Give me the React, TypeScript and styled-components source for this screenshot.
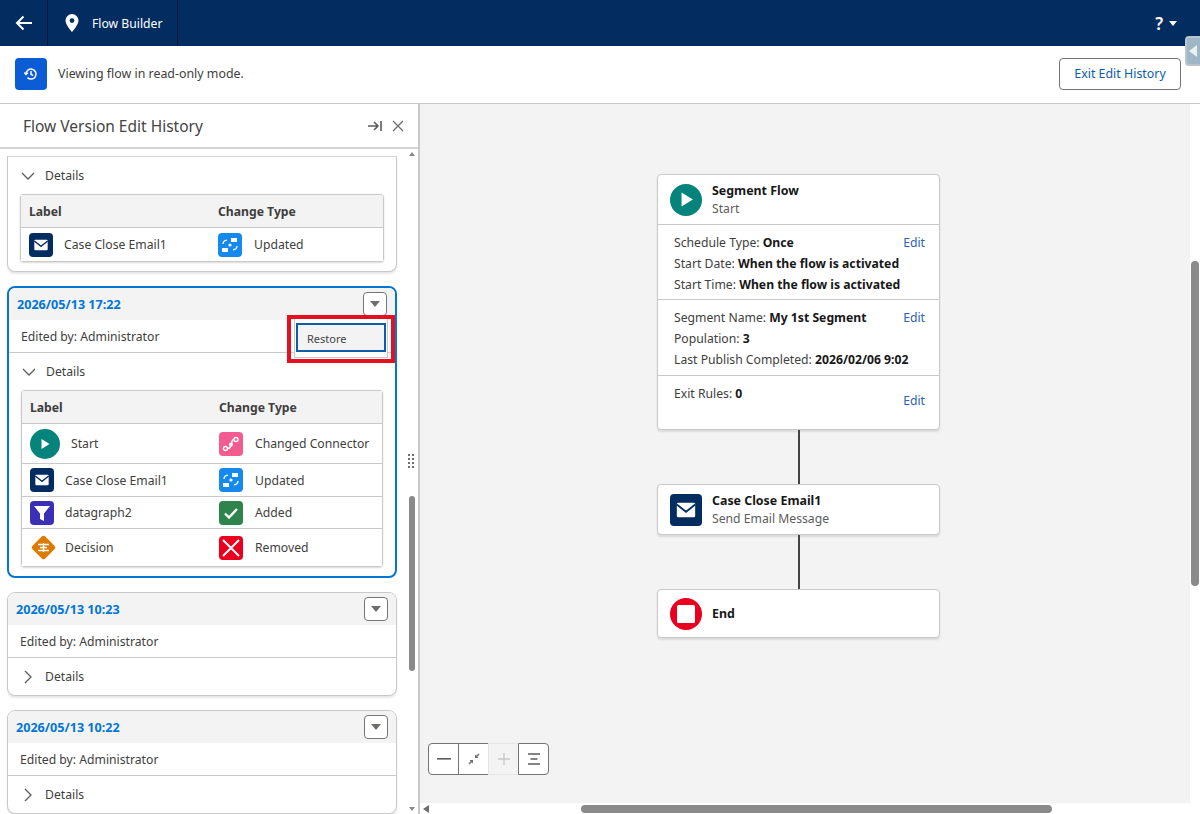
import React from "react"
import styled, { createGlobalStyle } from "styled-components"

const GlobalStyle = createGlobalStyle`
  html, body {
    margin: 0;
    padding: 0;
    background: #fff;
    font-family: "Noto Sans", "Open Sans", "Liberation Sans", sans-serif;
    color: #3e3e3c;
  }
  * { box-sizing: border-box; }
`

const Page = styled.div`
  position: relative;
  width: 1200px;
  height: 814px;
  overflow: hidden;
  display: flex;
  flex-direction: column;
`

const NavBar = styled.header`
  height: 46px;
  flex: none;
  background: #032d60;
  display: flex;
  align-items: stretch;
  color: #fff;
`

const BackCell = styled.div`
  width: 48px;
  display: flex;
  align-items: center;
  justify-content: center;
  border-right: 1px solid #01183a;
`

const AppCell = styled.div`
  width: 130px;
  display: flex;
  align-items: center;
  padding-left: 16px;
  gap: 12px;
  font-size: 12.2px;
  border-right: 1px solid #01183a;
`

const NavSpacer = styled.div`
  flex: 1;
`

const HelpCell = styled.div`
  display: flex;
  align-items: center;
  gap: 6px;
  padding-right: 23px;
  font-size: 17px;
  font-weight: 600;
`

const SideTab = styled.div`
  position: absolute;
  top: 36px;
  right: -6px;
  width: 21px;
  height: 30px;
  border-radius: 4px;
  border: 2px solid #b9c4cf;
  background: #9fb6c4;
  display: flex;
  align-items: center;
  padding-left: 2px;
`

const Banner = styled.div`
  height: 58px;
  flex: none;
  background: #fff;
  display: flex;
  align-items: center;
  padding: 0 19px 2px 15px;
  border-bottom: 1px solid #c9c9c9;
`

const BannerIcon = styled.div`
  width: 32px;
  height: 32px;
  border-radius: 4px;
  background: #0b5cd5;
  display: flex;
  align-items: center;
  justify-content: center;
  margin-right: 11px;
`

const BannerText = styled.span`
  flex: 1;
  font-size: 12.4px;
  color: #3e3e3c;
`

const ExitButton = styled.button`
  width: 122px;
  height: 32px;
  border: 1px solid #747474;
  border-radius: 4px;
  background: #fff;
  color: #0b5cab;
  font: inherit;
  font-size: 12.4px;
  padding: 0;
`

const Main = styled.main`
  flex: 1;
  display: flex;
  min-height: 0;
`

const Panel = styled.aside`
  position: relative;
  width: 420px;
  flex: none;
  background: #fff;
  border-right: 2px solid #c9c9c9;
  display: flex;
  flex-direction: column;
`

const PanelHeader = styled.div`
  height: 45px;
  flex: none;
  display: flex;
  align-items: center;
  padding: 0 14px 0 23px;
  border-bottom: 2px solid #d4d4d4;
`

const PanelTitle = styled.h2`
  flex: 1;
  margin: 0;
  font-size: 15.5px;
  font-weight: 400;
  color: #444;
`

const PanelTools = styled.div`
  display: flex;
  align-items: center;
  gap: 10px;
`

const CardList = styled.div`
  flex: 1;
  min-height: 0;
  overflow: hidden;
  padding: 7px 21px 0 7px;
  display: flex;
  flex-direction: column;
  gap: 14px;
`

const Card = styled.section<{ $active?: boolean; $clipped?: boolean }>`
  flex: none;
  background: #fff;
  border: ${p => (p.$active ? "2px solid #0176d3" : "1px solid #c9c9c9")};
  border-top: ${p => (p.$clipped ? "1px solid #d4d4d4" : undefined)};
  border-radius: ${p => (p.$clipped ? "0 0 8px 8px" : "8px")};
  box-shadow: ${p => (p.$active ? "none" : "0 2px 2px rgba(0, 0, 0, 0.1)")};
  overflow: hidden;
`

const CardHeader = styled.div`
  height: 32px;
  background: #f3f3f3;
  display: flex;
  align-items: center;
  justify-content: space-between;
  padding: 0 8px;
`

const CardDate = styled.span`
  font-size: 12.6px;
  font-weight: 700;
  color: #0176d3;
`

const MenuButton = styled.div`
  width: 24px;
  height: 24px;
  border: 1px solid #747474;
  border-radius: 4px;
  background: #fff;
  display: flex;
  align-items: center;
  justify-content: center;
`

const Caret = styled.span`
  width: 0;
  height: 0;
  border-left: 5px solid transparent;
  border-right: 5px solid transparent;
  border-top: 6px solid #706e6b;
`

const EditedRow = styled.div`
  height: 33px;
  display: flex;
  align-items: center;
  padding-left: 12px;
  font-size: 12.2px;
  border-bottom: 1px solid #c9c9c9;
`

const DetailsRow = styled.div`
  height: 37px;
  display: flex;
  align-items: center;
  gap: 10px;
  padding-left: 13px;
  font-size: 12.2px;
`

const ChangeTable = styled.div`
  margin: 0 12px 9px 12px;
  border: 1px solid #c9c9c9;
  border-radius: 3px;
  box-shadow: 0 1px 2px rgba(0, 0, 0, 0.15);
  font-size: 12.2px;
`

const ChangeRow = styled.div<{ $height: number; $head?: boolean }>`
  height: ${p => p.$height}px;
  display: grid;
  grid-template-columns: 189px 1fr;
  align-items: center;
  padding-left: 8px;
  background: ${p => (p.$head ? "#f3f3f3" : "#fff")};
  font-weight: ${p => (p.$head ? 700 : 400)};
  border-bottom: 1px solid #c9c9c9;
  &:last-child {
    border-bottom: none;
  }
`

const Cell = styled.div<{ $gap: number }>`
  display: flex;
  align-items: center;
  gap: ${p => p.$gap}px;
`

const Tile = styled.span<{ $bg: string; $size?: number; $round?: boolean }>`
  width: ${p => p.$size ?? 24}px;
  height: ${p => p.$size ?? 24}px;
  flex: none;
  border-radius: ${p => (p.$round ? "50%" : "4px")};
  background: ${p => p.$bg};
  display: flex;
  align-items: center;
  justify-content: center;
`

const RestoreMenu = styled.div`
  position: absolute;
  top: 212px;
  left: 294px;
  width: 94px;
  height: 42px;
  background: #fff;
  border: 1px solid #c9c9c9;
  padding: 6px 1px 0;
`

const RestoreItem = styled.div`
  height: 29px;
  border: 2px solid #0b5cab;
  background: #f3f3f3;
  font-size: 11px;
  line-height: 27px;
  padding-left: 9px;
  color: #444;
`

const Annotation = styled.div`
  position: absolute;
  top: 211px;
  left: 287px;
  width: 108px;
  height: 48px;
  border: 4px solid #e4101f;
`

const ScrollThumb = styled.div`
  position: absolute;
  left: 409px;
  top: 392px;
  width: 6px;
  height: 175px;
  border-radius: 3px;
  background: #8a8a8a;
`

const ScrollArrow = styled.span<{ $up?: boolean }>`
  position: absolute;
  left: 409px;
  ${p => (p.$up ? "top: 48px;" : "bottom: 3px;")}
  border-left: 3px solid transparent;
  border-right: 3px solid transparent;
  ${p => (p.$up ? "border-bottom" : "border-top")}: 4px solid #8a8a8a;
`

const Grip = styled.div`
  position: absolute;
  left: 408px;
  top: 350px;
  display: grid;
  grid-template-columns: 2px 2px;
  gap: 2px;
  i {
    width: 2px;
    height: 2px;
    background: #706e6b;
  }
`

const Canvas = styled.div`
  position: relative;
  flex: 1;
  min-width: 0;
  background: #f3f3f3;
  padding: 70px 0 0 237px;
`

const Flow = styled.div`
  width: 283px;
  display: flex;
  flex-direction: column;
  align-items: center;
`

const Node = styled.article`
  width: 100%;
  background: #fff;
  border: 1px solid #c9c9c9;
  border-radius: 4px;
  box-shadow: 0 2px 2px rgba(0, 0, 0, 0.1);
`

const NodeHead = styled.div<{ $height: number }>`
  height: ${p => p.$height}px;
  display: flex;
  align-items: center;
  gap: 10px;
  padding-left: 12px;
`

const NodeTitle = styled.div`
  font-size: 12.4px;
  font-weight: 700;
  color: #181818;
  line-height: 18px;
`

const NodeSub = styled.div`
  font-size: 12.2px;
  color: #5c5c5c;
  line-height: 18px;
`

const NodeSection = styled.div<{ $height: number }>`
  position: relative;
  height: ${p => p.$height}px;
  padding: 7px 14px 0 16px;
  border-top: 1px solid #c9c9c9;
  font-size: 12.2px;
  line-height: 21px;
`

const Bold = styled.b`
  font-weight: 700;
  color: #181818;
`

const EditLink = styled.a<{ $top: number }>`
  position: absolute;
  right: 14px;
  top: ${p => p.$top}px;
  color: #2c62b8;
`

const Connector = styled.div`
  width: 2px;
  height: 54px;
  background: #444;
`

const ZoomBar = styled.div`
  position: absolute;
  left: 9px;
  top: 639px;
  height: 32px;
  display: flex;
  border-radius: 4px;
`

const ZoomButton = styled.div<{ $off?: boolean; $pos?: "first" | "last" }>`
  width: 31px;
  display: flex;
  align-items: center;
  justify-content: center;
  background: ${p => (p.$off ? "#f3f3f3" : "#fff")};
  border: 1px solid ${p => (p.$off ? "#e5e5e5" : "#747474")};
  margin-left: -1px;
  border-radius: ${p => (p.$pos === "first" ? "4px 0 0 4px" : p.$pos === "last" ? "0 4px 4px 0" : "0")};
`

const HScroll = styled.div`
  position: absolute;
  left: 0;
  right: 0;
  bottom: 0;
  height: 11px;
  background: #fff;
`

const HThumb = styled.div`
  position: absolute;
  left: 161px;
  top: 2px;
  width: 471px;
  height: 8px;
  border-radius: 4px;
  background: #8a8a8a;
`

const HArrow = styled.span`
  position: absolute;
  left: 3px;
  top: 2px;
  border-top: 4px solid transparent;
  border-bottom: 4px solid transparent;
  border-right: 6px solid #706e6b;
`

const VScroll = styled.div`
  position: absolute;
  top: 0;
  bottom: 0;
  right: 0;
  width: 10px;
  background: #fff;
`

const VThumb = styled.div`
  position: absolute;
  top: 157px;
  left: 1px;
  width: 8px;
  height: 325px;
  border-radius: 4px;
  background: #8a8a8a;
`

const MailGlyph = ({ size = 16 }: { size?: number }) => (
  <svg width={size} height={size} viewBox="0 0 24 24" fill="none">
    <rect x="2" y="4" width="20" height="16" rx="1.5" fill="#fff" />
    <path d="M2 6l10 8 10-8" stroke="#032d60" strokeWidth="2" />
  </svg>
)

const UpdatedGlyph = () => (
  <svg width="18" height="18" viewBox="0 0 18 18" fill="#fff">
    <rect x="10" y="2" width="6" height="4" />
    <rect x="1" y="12" width="6" height="4" />
    <circle cx="9" cy="9" r="1.6" />
    <path d="M2 8c0-2 1.500-3.500 4-3.800" stroke="#fff" strokeWidth="1.300" fill="none" />
    <path d="M16 10c0 2-1.500 3.500-4 3.800" stroke="#fff" strokeWidth="1.300" fill="none" />
  </svg>
)

const ConnectorGlyph = () => (
  <svg width="18" height="18" viewBox="0 0 18 18" fill="none" stroke="#fff" strokeWidth="1.400">
    <circle cx="3.500" cy="13.500" r="2" />
    <circle cx="14" cy="4.500" r="2" />
    <circle cx="9" cy="9.500" r="1.300" fill="#fff" />
    <path d="M5.500 13.500c2 0 3-1 3.500-3M9.500 8c.5-2 1.500-3.500 2.500-3.500" />
  </svg>
)

const FilterGlyph = () => (
  <svg width="20" height="20" viewBox="0 0 20 20" fill="#fff">
    <path d="M2 3h16l-6 7.500V18l-4-2v-5.500z" />
  </svg>
)

const CheckGlyph = () => (
  <svg width="18" height="18" viewBox="0 0 18 18" fill="none" stroke="#fff" strokeWidth="2.400">
    <path d="M3 9.500l4 4 8-8.500" />
  </svg>
)

const CrossGlyph = () => (
  <svg width="20" height="20" viewBox="0 0 20 20" fill="none" stroke="#fff" strokeWidth="2">
    <path d="M2 2l16 16M18 2L2 18" />
  </svg>
)

const DecisionIcon = () => (
  <svg width="27" height="27" viewBox="0 0 27 27" style={{ flex: "none" }}>
    <rect x="4.500" y="4.500" width="18" height="18" rx="2.500" transform="rotate(45 13.500 13.500)" fill="#dd7a01" />
    <path d="M8 10.500h11M8 16.500h11M10 13.500h7M13.500 9v9" stroke="#fff" strokeWidth="1.400" />
  </svg>
)

const PlayGlyph = ({ size }: { size: number }) => (
  <svg width={size} height={size} viewBox="0 0 12 12" fill="#fff">
    <path d="M2.500 1l8 5-8 5z" />
  </svg>
)

const Chevron = ({ open }: { open?: boolean }) => (
  <svg width="14" height="14" viewBox="0 0 14 14" fill="none" stroke="#5c5c5c" strokeWidth="1.300">
    <path d={open ? "M1 4l6 6 6-6" : "M4 1l6 6-6 6"} />
  </svg>
)

type Change = { icon: React.ReactNode; gap: number; label: string; typeIcon: React.ReactNode; type: string; height: number }

const emailRow = (height: number): Change => ({
  icon: <Tile $bg="#032d60"><MailGlyph /></Tile>,
  gap: 11,
  label: "Case Close Email1",
  typeIcon: <Tile $bg="#1589ee"><UpdatedGlyph /></Tile>,
  type: "Updated",
  height,
})

const selectedChanges: Change[] = [
  {
    icon: <Tile $bg="#06847b" $size={30} $round><PlayGlyph size={12} /></Tile>,
    gap: 11,
    label: "Start",
    typeIcon: <Tile $bg="#f45b8e"><ConnectorGlyph /></Tile>,
    type: "Changed Connector",
    height: 40,
  },
  emailRow(33),
  {
    icon: <Tile $bg="#3a2fb5"><FilterGlyph /></Tile>,
    gap: 11,
    label: "datagraph2",
    typeIcon: <Tile $bg="#2e844a"><CheckGlyph /></Tile>,
    type: "Added",
    height: 32,
  },
  {
    icon: <DecisionIcon />,
    gap: 8,
    label: "Decision",
    typeIcon: <Tile $bg="#ea001e"><CrossGlyph /></Tile>,
    type: "Removed",
    height: 37,
  },
]

const Changes = ({ rows }: { rows: Change[] }) => (
  <ChangeTable>
    <ChangeRow $height={33} $head>
      <span>Label</span>
      <span>Change Type</span>
    </ChangeRow>
    {rows.map(r => (
      <ChangeRow $height={r.height} key={r.label}>
        <Cell $gap={r.gap}>{r.icon}{r.label}</Cell>
        <Cell $gap={12}>{r.typeIcon}{r.type}</Cell>
      </ChangeRow>
    ))}
  </ChangeTable>
)

const CollapsedCard = ({ date }: { date: string }) => (
  <Card>
    <CardHeader>
      <CardDate>{date}</CardDate>
      <MenuButton><Caret /></MenuButton>
    </CardHeader>
    <EditedRow>Edited by: Administrator</EditedRow>
    <DetailsRow><Chevron />Details</DetailsRow>
  </Card>
)

export default function App() {
  return (
    <Page>
      <GlobalStyle />
      <NavBar>
        <BackCell>
          <svg width="18" height="18" viewBox="0 0 18 18" fill="none" stroke="#fff" strokeWidth="2">
            <path d="M17 9H2M8.500 2.500L2 9l6.500 6.500" />
          </svg>
        </BackCell>
        <AppCell>
          <svg width="16" height="18" viewBox="0 0 16 18" fill="#fff">
            <path fillRule="evenodd" d="M8 0a6.500 6.500 0 0 1 6.500 6.500C14.500 11 8 18 8 18S1.500 11 1.500 6.500A6.500 6.500 0 0 1 8 0zm0 4.200a2.400 2.400 0 1 0 0 4.800 2.400 2.400 0 0 0 0-4.800z" />
          </svg>
          Flow Builder
        </AppCell>
        <NavSpacer />
        <HelpCell>
          ?
          <svg width="8" height="5" viewBox="0 0 8 5" fill="#fff"><path d="M0 0h8L4 5z" /></svg>
        </HelpCell>
      </NavBar>
      <SideTab>
        <svg width="8" height="14" viewBox="0 0 8 14" fill="#e8f0f4"><path d="M8 1v12L0 7z" /></svg>
      </SideTab>

      <Banner>
        <BannerIcon>
          <svg width="14" height="14" viewBox="0 0 14 14" fill="none" stroke="#fff" strokeWidth="1.500">
            <path d="M2 7a5 5 0 1 1 1.500 3.600" />
            <path d="M.3 5.500L2 7.500l2-1.800" />
            <path d="M7 4v3.300l2.200 1.200" />
          </svg>
        </BannerIcon>
        <BannerText>Viewing flow in read-only mode.</BannerText>
        <ExitButton>Exit Edit History</ExitButton>
      </Banner>

      <Main>
        <Panel>
          <PanelHeader>
            <PanelTitle>Flow Version Edit History</PanelTitle>
            <PanelTools>
              <svg width="14" height="12" viewBox="0 0 14 12" fill="none" stroke="#5c5c5c" strokeWidth="1.600">
                <path d="M0 6h10M6 2l4 4-4 4M13 1v10" />
              </svg>
              <svg width="12" height="12" viewBox="0 0 12 12" fill="none" stroke="#706e6b" strokeWidth="1.300">
                <path d="M1 1l10 10M11 1L1 11" />
              </svg>
            </PanelTools>
          </PanelHeader>
          <CardList>
            <Card $clipped>
              <DetailsRow><Chevron open />Details</DetailsRow>
              <Changes rows={[emailRow(33)]} />
            </Card>
            <Card $active>
              <CardHeader>
                <CardDate>2026/05/13 17:22</CardDate>
                <MenuButton><Caret /></MenuButton>
              </CardHeader>
              <EditedRow>Edited by: Administrator</EditedRow>
              <DetailsRow><Chevron open />Details</DetailsRow>
              <Changes rows={selectedChanges} />
            </Card>
            <CollapsedCard date="2026/05/13 10:23" />
            <CollapsedCard date="2026/05/13 10:22" />
          </CardList>
          <RestoreMenu><RestoreItem>Restore</RestoreItem></RestoreMenu>
          <Annotation />
          <ScrollArrow $up />
          <Grip>{Array.from({ length: 8 }, (_, i) => <i key={i} />)}</Grip>
          <ScrollThumb />
          <ScrollArrow />
        </Panel>

        <Canvas>
          <Flow>
            <Node>
              <NodeHead $height={49}>
                <Tile $bg="#06847b" $size={32} $round><PlayGlyph size={17} /></Tile>
                <div>
                  <NodeTitle>Segment Flow</NodeTitle>
                  <NodeSub>Start</NodeSub>
                </div>
              </NodeHead>
              <NodeSection $height={75}>
                Schedule Type: <Bold>Once</Bold><br />
                Start Date: <Bold>When the flow is activated</Bold><br />
                Start Time: <Bold>When the flow is activated</Bold>
                <EditLink $top={7}>Edit</EditLink>
              </NodeSection>
              <NodeSection $height={76}>
                Segment Name: <Bold>My 1st Segment</Bold><br />
                Population: <Bold>3</Bold><br />
                Last Publish Completed: <Bold>2026/02/06 9:02</Bold>
                <EditLink $top={7}>Edit</EditLink>
              </NodeSection>
              <NodeSection $height={54}>
                Exit Rules: <Bold>0</Bold>
                <EditLink $top={14}>Edit</EditLink>
              </NodeSection>
            </Node>
            <Connector />
            <Node>
              <NodeHead $height={49}>
                <Tile $bg="#032d60" $size={32}><MailGlyph size={22} /></Tile>
                <div>
                  <NodeTitle>Case Close Email1</NodeTitle>
                  <NodeSub>Send Email Message</NodeSub>
                </div>
              </NodeHead>
            </Node>
            <Connector />
            <Node>
              <NodeHead $height={47}>
                <Tile $bg="#ea001e" $size={32} $round>
                  <svg width="18" height="18" viewBox="0 0 18 18"><rect width="18" height="18" rx="1.500" fill="#fff" /></svg>
                </Tile>
                <NodeTitle>End</NodeTitle>
              </NodeHead>
            </Node>
          </Flow>

          <ZoomBar>
            <ZoomButton $pos="first">
              <svg width="14" height="2" viewBox="0 0 14 2"><rect width="14" height="1.600" fill="#5c5c5c" /></svg>
            </ZoomButton>
            <ZoomButton>
              <svg width="12" height="12" viewBox="0 0 12 12" fill="#706e6b">
                <path d="M7 5V1.500l1.200 1.200L10.500.5l1 1-2.200 2.300L10.500 5zM5 7v3.500L3.800 9.300 1.500 11.500l-1-1 2.200-2.300L1.500 7z" />
              </svg>
            </ZoomButton>
            <ZoomButton $off>
              <svg width="12" height="12" viewBox="0 0 12 12" stroke="#c9c9c9" strokeWidth="1.300"><path d="M6 0v12M0 6h12" /></svg>
            </ZoomButton>
            <ZoomButton $pos="last">
              <svg width="14" height="12" viewBox="0 0 14 12" fill="none" stroke="#5c5c5c" strokeWidth="1.400">
                <path d="M1 1h12M3.500 6h7M1 11h12" />
              </svg>
            </ZoomButton>
          </ZoomBar>

          <HScroll>
            <HArrow />
            <HThumb />
          </HScroll>
          <VScroll><VThumb /></VScroll>
        </Canvas>
      </Main>
    </Page>
  )
}
